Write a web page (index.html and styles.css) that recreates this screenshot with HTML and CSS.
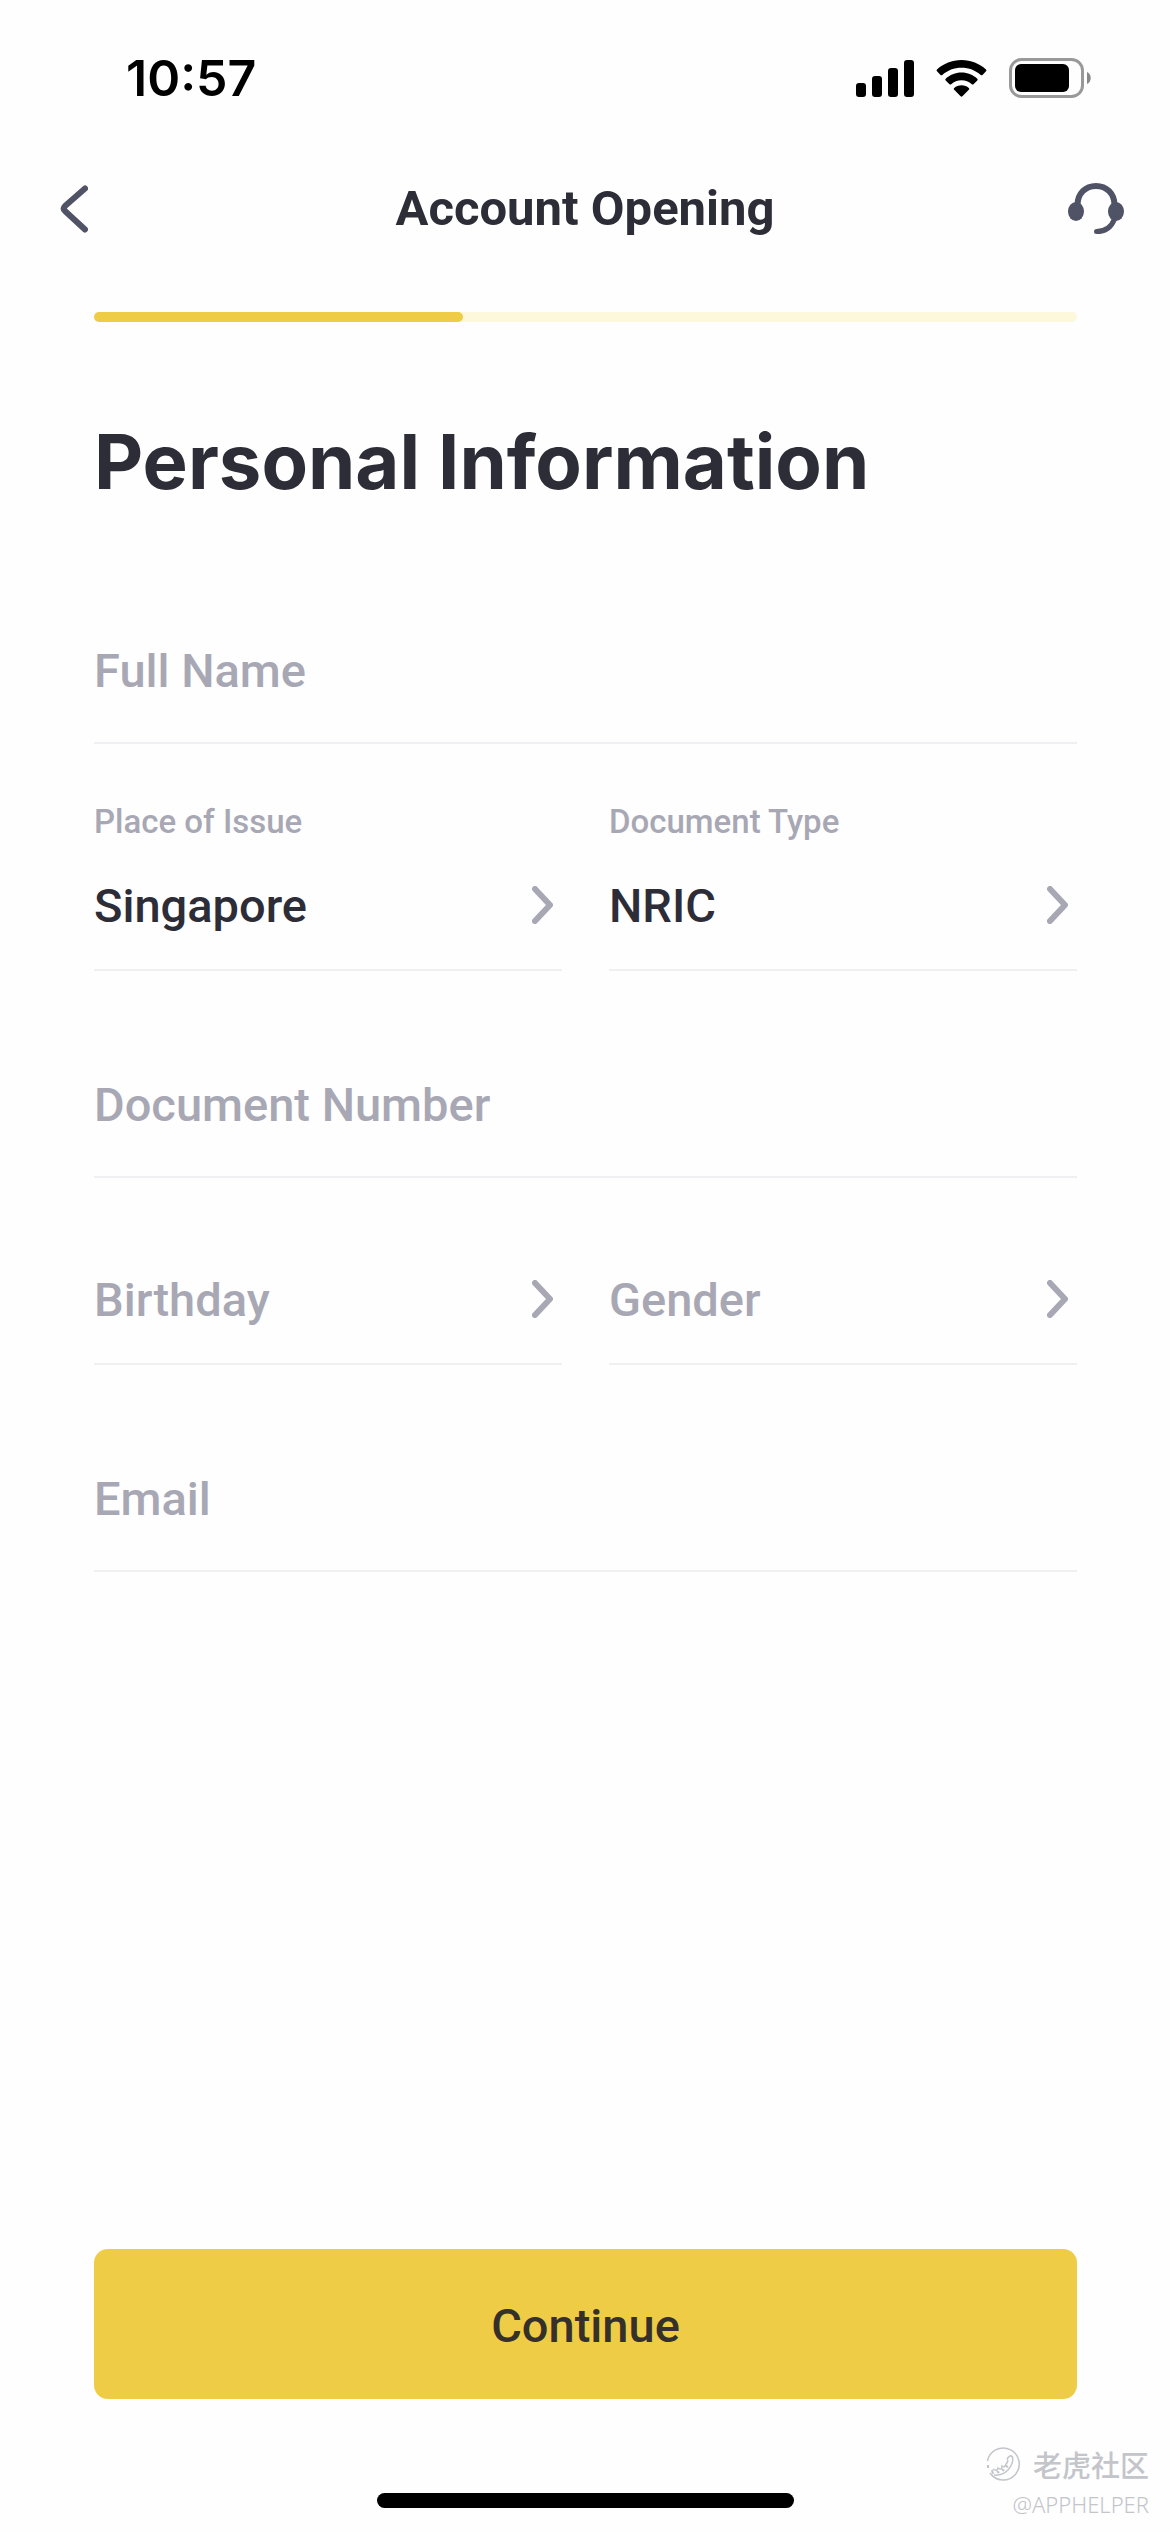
FILE: index.html
```html
<!DOCTYPE html>
<html lang="en">
<head>
<meta charset="utf-8">
<meta name="viewport" content="width=device-width, initial-scale=1">
<title>Account Opening</title>
<link rel="stylesheet" href="styles.css">
</head>
<body>
<div class="screen">
  <div class="status-bar">
    <time class="clock">10:57</time>
    <div class="status-icons">
      <svg class="signal" width="58" height="38" viewBox="0 0 58 38" aria-hidden="true">
        <rect x="0" y="24" width="10" height="14" rx="3"/>
        <rect x="16" y="17" width="10" height="21" rx="3"/>
        <rect x="32" y="9" width="10" height="29" rx="3"/>
        <rect x="48" y="1" width="10" height="37" rx="3"/>
      </svg>
      <svg class="wifi" width="51" height="38" viewBox="0 0 51 38" aria-hidden="true">
        <path d="M25.500 1C35 1 43.500 4.600 50 10.400Q51 11.300 50 12.300L46.500 15.900Q45.600 16.700 44.700 15.900C39.500 11.300 32.900 8.700 25.500 8.700S11.500 11.300 6.300 15.900Q5.400 16.700 4.500 15.900L1 12.300Q0 11.300 1 10.400C7.500 4.600 16 1 25.500 1Z"/>
        <path d="M25.500 13.500C31.700 13.500 37.200 15.900 41.300 19.700Q42.200 20.600 41.300 21.500L37.500 25.200Q36.700 26 35.800 25.200C33 22.700 29.500 21.200 25.500 21.200S18 22.700 15.200 25.200Q14.300 26 13.500 25.200L9.700 21.500Q8.800 20.600 9.700 19.700C13.800 15.900 19.300 13.500 25.500 13.500Z"/>
        <path d="M25.500 26.300C28.300 26.300 30.900 27.300 32.800 29Q33.700 29.900 32.800 30.800L26.400 37.300Q25.500 38.200 24.600 37.300L18.200 30.800Q17.300 29.900 18.200 29C20.100 27.300 22.700 26.300 25.500 26.300Z"/>
      </svg>
      <svg class="battery" width="83" height="40" viewBox="0 0 83 40" aria-hidden="true">
        <rect x="1.500" y="1.500" width="72" height="37" rx="11" fill="none" stroke="#999" stroke-width="3"/>
        <rect x="6" y="6" width="54" height="28" rx="6"/>
        <path d="M78 14C83 16 83 24 78 26Z" fill="#888"/>
      </svg>
    </div>
  </div>

  <header class="nav-bar">
    <button class="icon-button back" type="button" aria-label="Back">
      <svg width="28" height="48" viewBox="0 0 28 48" aria-hidden="true">
        <path d="M25 3.500L5 21Q2.500 23.500 5 26L25 44.500" fill="none" stroke="#505266" stroke-width="6" stroke-linecap="round" stroke-linejoin="round"/>
      </svg>
    </button>
    <h1 class="nav-title">Account Opening</h1>
    <button class="icon-button support" type="button" aria-label="Customer support">
      <svg width="56" height="52" viewBox="0 0 56 52" aria-hidden="true">
        <ellipse cx="8" cy="28.500" rx="8" ry="9.500" fill="#505266"/>
        <ellipse cx="48" cy="28.500" rx="8" ry="9.500" fill="#505266"/>
        <path d="M9.500 22C9.500 10.500 17.500 3 28 3S46.500 10.500 46.500 22" fill="none" stroke="#505266" stroke-width="6"/>
        <path d="M46.500 36C43.500 44 37 48.500 28.500 48.500" fill="none" stroke="#505266" stroke-width="5" stroke-linecap="round"/>
      </svg>
    </button>
  </header>

  <main class="content">
    <div class="progress" role="progressbar" aria-label="Application progress" aria-valuemin="0" aria-valuemax="8" aria-valuenow="3">
      <div class="progress-fill" style="width: 37.5%"></div>
    </div>
    <h2 class="heading">Personal Information</h2>

    <form class="form">
      <div class="text-field">
        <input class="control" type="text" placeholder="Full Name" aria-label="Full Name">
      </div>
      <div class="pair pair-labelled">
        <div class="select-field">
          <label class="label" for="place">Place of Issue</label>
          <div class="select-box">
            <select class="control" id="place"><option>Singapore</option></select>
            <svg class="chevron" width="21" height="38" viewBox="0 0 21 38" aria-hidden="true"><path d="M3 3L18 19L3 35"/></svg>
          </div>
        </div>
        <div class="select-field">
          <label class="label" for="doctype">Document Type</label>
          <div class="select-box">
            <select class="control" id="doctype"><option>NRIC</option></select>
            <svg class="chevron" width="21" height="38" viewBox="0 0 21 38" aria-hidden="true"><path d="M3 3L18 19L3 35"/></svg>
          </div>
        </div>
      </div>
      <div class="text-field spaced">
        <input class="control" type="text" placeholder="Document Number" aria-label="Document Number">
      </div>
      <div class="pair pair-plain">
        <div class="select-box">
          <select class="control empty" aria-label="Birthday"><option>Birthday</option></select>
          <svg class="chevron" width="21" height="38" viewBox="0 0 21 38" aria-hidden="true"><path d="M3 3L18 19L3 35"/></svg>
        </div>
        <div class="select-box">
          <select class="control empty" aria-label="Gender"><option>Gender</option></select>
          <svg class="chevron" width="21" height="38" viewBox="0 0 21 38" aria-hidden="true"><path d="M3 3L18 19L3 35"/></svg>
        </div>
      </div>
      <div class="text-field spaced">
        <input class="control" type="email" placeholder="Email" aria-label="Email">
      </div>
      <button class="continue" type="submit">Continue</button>
    </form>
  </main>

  <div class="home-indicator"></div>

  <div class="watermark">
    <div class="watermark-brand">
      <svg width="34" height="34" viewBox="0 0 34 34" fill="none" stroke="#c3c5ca" aria-hidden="true">
        <path d="M1.500 14A16 16 0 1 1 4 26" stroke-width="1.500"/>
        <path d="M21 12Q24 7 26.500 10Q28 16 22 23Q16 29 8 28M21 12Q23 14 20 17Q19 21 16 19Q16 24 12 21Q11 25 7 22" stroke-width="1.500"/>
        <path d="M2 18V21M6 23L7 27M11 24L13 26M16 22L18 24M20 19L22 20" stroke-width="2"/>
      </svg>
      <span lang="zh">老虎社区</span>
    </div>
    <div class="watermark-user">@APPHELPER</div>
  </div>
</div>
</body>
</html>
```
FILE: styles.css
```css
* {
  box-sizing: border-box;
}

body {
  margin: 0;
  background: #fefefe;
  color: #2d2d38;
  font-family: Roboto, "Liberation Sans", sans-serif;
}

button,
input,
select {
  margin: 0;
  padding: 0;
  border: 0;
  border-radius: 0;
  background: none;
  color: inherit;
  font: inherit;
}

.screen {
  position: relative;
  display: flex;
  flex-direction: column;
  min-height: 100vh;
}

.status-bar {
  display: flex;
  justify-content: space-between;
  align-items: center;
  height: 141px;
  padding: 14px 78px 0 126px;
  color: #000;
}

.clock {
  font: 600 50px/60px Inter, sans-serif;
}

.status-icons {
  display: flex;
  align-items: center;
  gap: 22px;
}

.nav-bar {
  display: grid;
  grid-template-columns: 1fr auto 1fr;
  align-items: center;
  height: 132px;
  padding: 4px 46px 0;
}

.icon-button {
  display: flex;
}

.back {
  justify-self: start;
  padding: 0 14px;
}

.support {
  justify-self: end;
}

.nav-title {
  margin: 0;
  font-size: 49px;
  line-height: 64px;
  font-weight: 700;
}

.content {
  display: flex;
  flex: 1;
  flex-direction: column;
  padding: 39px 93px 0 94px;
}

.progress {
  height: 10px;
  border-radius: 5px;
  background: #fdf7dc;
}

.progress-fill {
  height: 100%;
  border-radius: 5px;
  background: #efcc45;
}

.heading {
  margin: 95px 0 0;
  font: 700 76px/88px Inter, sans-serif;
}

.form {
  display: flex;
  flex: 1;
  flex-direction: column;
  padding-top: 136px;
  font-size: 47px;
  line-height: 54px;
  font-weight: 500;
}

.text-field,
.select-box {
  border-bottom: 2px solid #f0f0f2;
}

.text-field {
  padding-bottom: 45px;
}

.spaced {
  margin-top: 104px;
}

.control {
  display: block;
  width: 100%;
  height: 56px;
  padding-top: 2px;
  outline: 0;
  appearance: none;
}

.control::placeholder {
  color: #a8a8b5;
  opacity: 1;
}

.empty {
  color: #a8a8b5;
}

.pair {
  display: grid;
  grid-template-columns: 1fr 1fr;
  gap: 47px;
}

.pair-labelled {
  margin-top: 58px;
}

.pair-plain {
  margin-top: 93px;
}

.label {
  display: block;
  margin-bottom: 35px;
  color: #a8a8b5;
  font-size: 33px;
  line-height: 40px;
}

.select-box {
  display: grid;
  align-items: center;
  padding-bottom: 36px;
}

.select-box > * {
  grid-area: 1 / 1;
}

.chevron {
  justify-self: end;
  margin-right: 9px;
  fill: none;
  stroke: #a8a8b5;
  stroke-width: 6px;
  stroke-linecap: round;
  stroke-linejoin: round;
  pointer-events: none;
}

.continue {
  height: 150px;
  margin-top: auto;
  padding-top: 4px;
  border-radius: 14px;
  background: #efcc45;
  color: #35312a;
}

.home-indicator {
  align-self: center;
  width: 36%;
  max-width: 417px;
  height: 15px;
  margin: 94px 0 24px;
  border-radius: 8px;
  background: #000;
}

.watermark {
  position: absolute;
  right: 21px;
  bottom: 14px;
  color: #c3c5ca;
  text-align: right;
}

.watermark-brand {
  display: flex;
  align-items: center;
  justify-content: flex-end;
  gap: 13px;
  font: 500 29px/40px "Noto Sans CJK SC", sans-serif;
}

.watermark-user {
  margin-top: 6px;
  font: 300 22px/28px "Noto Sans", sans-serif;
}
```
